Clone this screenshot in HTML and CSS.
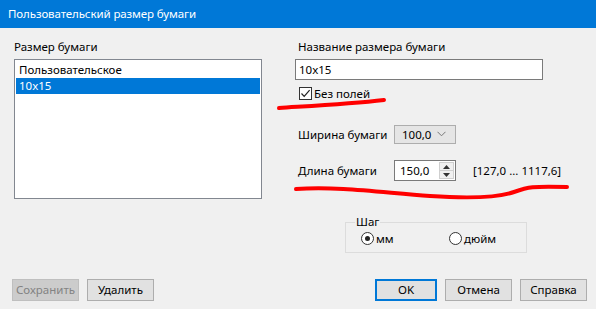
FILE: index.html
```html
<!DOCTYPE html>
<html lang="ru">
<head>
  <meta charset="UTF-8">
  <title>Пользовательский размер бумаги</title>
  <link rel="stylesheet" href="styles.css">
</head>
<body>
  <div class="window">
    <div class="titlebar">Пользовательский размер бумаги</div>

    <div class="content">
      <div class="col-left">
        <div class="label">Размер бумаги</div>
        <div class="listbox">
          <div class="item">Пользовательское</div>
          <div class="item selected">10x15</div>
        </div>
      </div>

      <div class="col-right">
        <div class="label">Название размера бумаги</div>
        <div class="textbox">10x15</div>

        <div class="check">
          <span class="box">
            <svg width="11" height="11" viewBox="0 0 11 11"><path d="M1.5 5.5 L4.2 8.3 L9.6 2.2" fill="none" stroke="#222" stroke-width="1.2"/></svg>
          </span>
          <span>Без полей</span>
        </div>

        <div class="row row-width">
          <span class="row-label">Ширина бумаги</span>
          <div class="select">
            <span>100,0</span>
            <svg width="9" height="6" viewBox="0 0 9 6"><path d="M0.5 0.8 L4.5 4.8 L8.5 0.8" fill="none" stroke="#777" stroke-width="1"/></svg>
          </div>
        </div>

        <div class="row row-length">
          <span class="row-label">Длина бумаги</span>
          <div class="spin">
            <span class="spin-value">150,0</span>
            <div class="spin-btns">
              <div class="spin-btn"><svg width="7" height="4" viewBox="0 0 7 4"><path d="M0 4 L3.5 0 L7 4 Z" fill="#333"/></svg></div>
              <div class="spin-btn"><svg width="7" height="4" viewBox="0 0 7 4"><path d="M0 0 L3.5 4 L7 0 Z" fill="#333"/></svg></div>
            </div>
          </div>
          <span class="range">[127,0 ... 1117,6]</span>
        </div>

        <fieldset class="step">
          <legend>Шаг</legend>
          <div class="radios">
            <div class="radio"><span class="circle on"></span>мм</div>
            <div class="radio"><span class="circle"></span>дюйм</div>
          </div>
        </fieldset>
      </div>
    </div>

    <div class="footer">
      <div class="btn-group">
        <div class="btn disabled">Сохранить</div>
        <div class="btn">Удалить</div>
      </div>
      <div class="btn-group">
        <div class="btn default">OK</div>
        <div class="btn">Отмена</div>
        <div class="btn">Справка</div>
      </div>
    </div>

    <svg class="scribble" width="596" height="309" viewBox="0 0 596 309">
      <path d="M279 108 C 310 106, 350 104, 384 100" />
      <path d="M296 189 C 340 186, 385 193, 430 196 S 500 197, 514 192 S 532 186, 567 187" />
    </svg>
  </div>
</body>
</html>
```

FILE: styles.css
```css
body {
  margin: 0;
  font-family: "Noto Sans", "DejaVu Sans", sans-serif;
  font-size: 11.5px;
  color: #000;
}

.window {
  position: relative;
  width: 596px;
  height: 309px;
  background: #f0f0f0;
  overflow: hidden;
}

.titlebar {
  height: 28px;
  line-height: 27px;
  padding-left: 8px;
  background: #0078d7;
  color: #fff;
  font-size: 11.5px;
  letter-spacing: -0.1px;
}

.content {
  display: flex;
  padding-top: 11px;
  height: 240px;
}

.label {
  height: 16px;
  line-height: 16px;
  margin-bottom: 4px;
}

.col-left {
  margin-left: 14px;
  width: 248px;
}

.listbox {
  height: 136px;
  border: 1px solid #828790;
  background: #fff;
  padding: 2px 1px 0 1px;
  width: 244px;
}

.item {
  height: 16px;
  line-height: 16px;
  padding-left: 3px;
}

.item.selected {
  background: #0078d7;
  color: #fff;
}

.col-right {
  margin-left: 33px;
  width: 248px;
}

.col-right .label {
  padding-left: 3px;
}

.textbox {
  height: 19px;
  line-height: 19px;
  border: 1px solid #7a7a7a;
  background: #fff;
  padding-left: 3px;
}

.check {
  display: flex;
  align-items: center;
  margin-top: 5px;
  padding-left: 4px;
  height: 16px;
}

.check .box {
  width: 11px;
  height: 11px;
  border: 1px solid #333;
  background: #fff;
  margin-right: 2px;
  display: flex;
}

.row {
  display: flex;
  align-items: center;
  padding-left: 3px;
  white-space: nowrap;
}

.row-label {
  width: 96px;
  flex-shrink: 0;
}

.row-width {
  margin-top: 23px;
  height: 20px;
}

.select {
  flex-shrink: 0;
  width: 62px;
  height: 19px;
  border: 1px solid #adadad;
  background: #e5e5e5;
  display: flex;
  align-items: center;
  justify-content: space-between;
  padding: 0 9px 0 7px;
  box-sizing: border-box;
}

.row-length {
  margin-top: 16px;
  height: 21px;
}

.spin {
  flex-shrink: 0;
  width: 62px;
  height: 21px;
  box-sizing: border-box;
  border: 1px solid #7a7a7a;
  background: #fff;
  display: flex;
  align-items: center;
  justify-content: space-between;
}

.spin-value {
  padding-left: 5px;
}

.spin-btns {
  width: 15px;
  height: 17px;
  margin-right: 1px;
  display: flex;
  flex-direction: column;
  border: 1px solid #cfcfcf;
  box-sizing: border-box;
}

.spin-btn {
  flex: 1;
  display: flex;
  align-items: center;
  justify-content: center;
  background: #f0f0f0;
}

.spin-btn + .spin-btn {
  border-top: 1px solid #cfcfcf;
}

.range {
  margin-left: 17px;
}

.step {
  margin: 34px 0 0 50px;
  width: 165px;
  min-width: 0;
  border: 1px solid #dcdcdc;
  padding: 0 0 6px 15px;
  box-sizing: content-box;
}

.step legend {
  padding: 0 1px;
  margin-left: -6px;
  line-height: 14px;
}

.radios {
  display: flex;
  height: 16px;
  margin-top: 1px;
}

.radio {
  display: flex;
  align-items: center;
}

.radio:first-child {
  width: 88px;
}

.circle {
  width: 11px;
  height: 11px;
  border: 1px solid #333;
  border-radius: 50%;
  background: #fff;
  margin-right: 2px;
  position: relative;
}

.circle.on::after {
  content: "";
  position: absolute;
  left: 3px;
  top: 3px;
  width: 5px;
  height: 5px;
  border-radius: 50%;
  background: #222;
}

.footer {
  display: flex;
  justify-content: space-between;
  padding: 0 9px 0 12px;
}

.btn-group {
  display: flex;
  gap: 8px;
}

.btn {
  width: 65px;
  height: 20px;
  line-height: 20px;
  text-align: center;
  border: 1px solid #adadad;
  background: #e1e1e1;
}

.btn.disabled {
  background: #cccccc;
  border-color: #bfbfbf;
  color: #838383;
}

.btn.default {
  border: 2px solid #0078d7;
  width: 58px;
  height: 18px;
  line-height: 18px;
}

.scribble {
  position: absolute;
  left: 0;
  top: 0;
  pointer-events: none;
}

.scribble path {
  fill: none;
  stroke: #f00;
  stroke-width: 4;
  stroke-linecap: round;
}
```
